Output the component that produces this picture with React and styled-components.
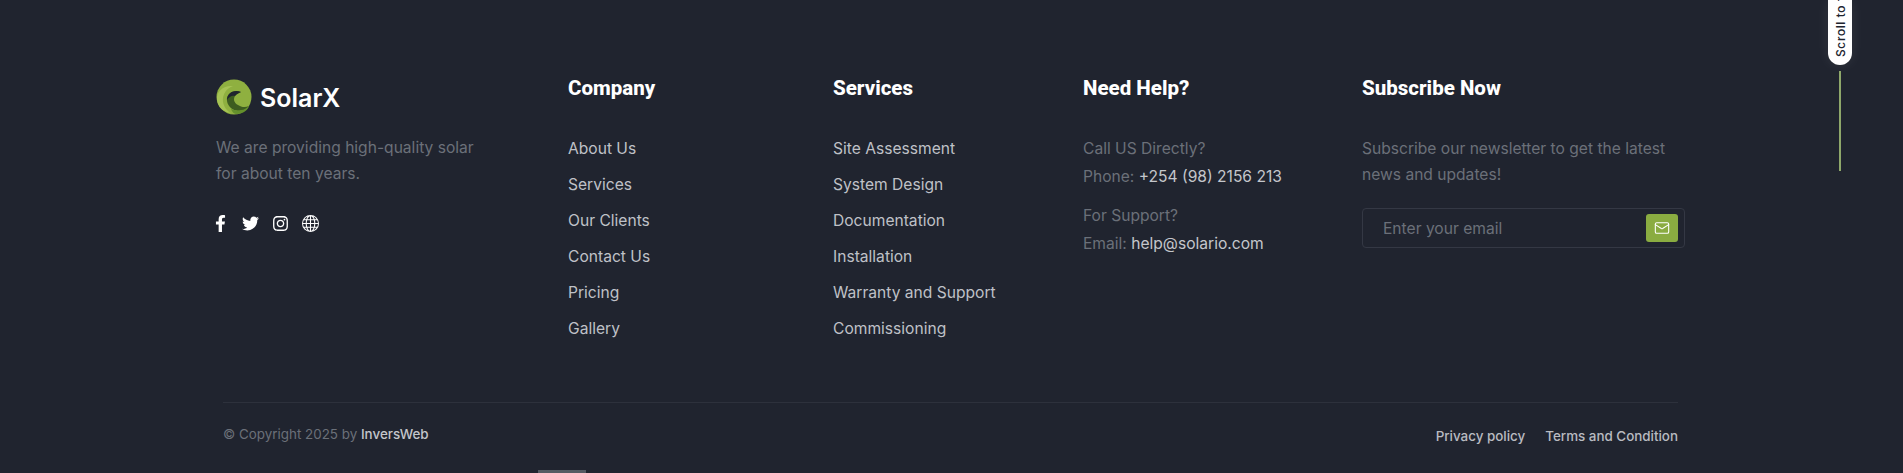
import React from 'react';
import styled, { createGlobalStyle } from 'styled-components';
import { FaFacebookF, FaTwitter, FaInstagram } from 'react-icons/fa';
import { BsGlobe } from 'react-icons/bs';
import { Mail } from 'lucide-react';

const GlobalStyle = createGlobalStyle`
  html, body {
    margin: 0;
    padding: 0;
    height: 473px;
    overflow: hidden;
    background: #20242f;
  }
  * { box-sizing: border-box; }
`;

const Footer = styled.footer`
  position: relative;
  height: 473px;
  overflow: hidden;
  padding: 74px 218px 0 216px;
  background: #20242f;
  font-family: Inter, "Liberation Sans", sans-serif;
  font-size: 15.6px;
  color: #6b7079;
`;

const Columns = styled.div`
  display: grid;
  grid-template-columns: 352px 265px 250px 279px 1fr;
  height: 328px;
`;

const Column = styled.div`
  display: flex;
  flex-direction: column;
`;

const Brand = styled.div`
  display: flex;
  align-items: center;
  gap: 8px;
  height: 36px;
  margin: 5px 0 20px;
`;

const BrandName = styled.span`
  padding-top: 2px;
  font-family: Inter, sans-serif;
  font-size: 25px;
  font-weight: 600;
  color: #fff;
`;

const Paragraph = styled.p`
  margin: 0;
  line-height: 26px;
  white-space: nowrap;
`;

const Socials = styled.div`
  display: flex;
  align-items: center;
  gap: 13px;
  margin: 28px 0 0 -4px;
  color: #fff;
  font-size: 17px;
  line-height: 0;
`;

const Heading = styled.h4`
  margin: 0 0 34px;
  height: 28px;
  font-family: Roboto, sans-serif;
  font-size: 20.5px;
  font-weight: 800;
  line-height: 28px;
  color: #fff;
`;

const LinkList = styled.ul`
  margin: 2px 0 0;
  padding: 0;
  list-style: none;
  display: flex;
  flex-direction: column;
  gap: 14px;
`;

const LinkItem = styled.li`
  line-height: 22px;
  color: #bfc1c7;
`;

const ContactBlock = styled.div`
  margin: -1px 0 12px;
  line-height: 28px;
`;

const Strong = styled.span`
  color: #c4c6cb;
`;

const SubscribeForm = styled.form`
  display: flex;
  align-items: center;
  justify-content: space-between;
  width: 323px;
  height: 40px;
  margin-top: 20px;
  padding: 0 6px 0 20px;
  border: 1px solid #343844;
  border-radius: 4px;
`;

const EmailInput = styled.input`
  flex: 1;
  min-width: 0;
  padding: 0;
  border: 0;
  outline: 0;
  background: transparent;
  font: inherit;
  color: #fff;
  &::placeholder { color: #6b7079; opacity: 1; }
`;

const SendButton = styled.button`
  display: flex;
  align-items: center;
  justify-content: center;
  width: 32px;
  height: 28px;
  padding: 0;
  border: 0;
  border-radius: 3px;
  background: #8aac41;
  color: #fff;
`;

const BottomBar = styled.div`
  display: flex;
  justify-content: space-between;
  align-items: center;
  margin: 0 7px;
  height: 64px;
  border-top: 1px solid #2d313c;
`;

const Copyright = styled.div`
  font-size: 13.4px;
  margin-top: -1px;
`;

const CopyrightLink = styled.span`
  color: #c4c6cb;
  font-weight: 500;
`;

const LegalLinks = styled.div`
  display: flex;
  gap: 20px;
  margin-top: 3px;
  font-size: 13.4px;
  font-weight: 500;
  color: #b9bbc1;
`;

const ScrollTop = styled.div`
  position: absolute;
  top: 0;
  left: 1828px;
  display: flex;
  flex-direction: column;
  align-items: center;
`;

const ScrollPill = styled.div`
  display: flex;
  justify-content: center;
  align-items: flex-start;
  width: 24px;
  height: 65px;
  padding-top: 2px;
  border-radius: 0 0 12px 12px;
  background: #fff;
  box-shadow: 0 0 14px rgba(255, 255, 255, 0.08);
  overflow: hidden;
`;

const ScrollText = styled.span`
  writing-mode: vertical-rl;
  transform: rotate(180deg);
  font-family: Inter, sans-serif;
  font-size: 12px;
  font-weight: 500;
  letter-spacing: 0.6px;
  color: #20242f;
  height: 55px;
  white-space: nowrap;
  text-align: left;
`;

const ScrollLine = styled.div`
  width: 2px;
  height: 100px;
  margin-top: 6px;
  background: #8fa86b;
`;

const StrayMark = styled.div`
  position: absolute;
  left: 538px;
  bottom: 0;
  width: 48px;
  height: 3px;
  background: #555a63;
`;

const Logo = () => (
  <svg width="36" height="36" viewBox="0 0 36 36">
    <circle cx="18" cy="18" r="17.5" fill="#8fb040" />
    <path d="M1 21C0 12 8 6 17 7 11 9 6 15 7 23c1 5 4 9 8 11C7 33 2 28 1 21z" fill="#a6c355" />
    <path d="M25 13C17 10 10 15 11 22c1 6 6 10 13 10 4 0 7-2 9-5-4 2-8 1-11-1-4-2-5-6-3-9 1-2 4-3 6-4z" fill="#3d5c20" />
    <path d="M15 30c3 1 6 2 10 1 3 0 6-2 8-4-1 4-6 8-12 8-3 0-5-2-6-5z" fill="#64902c" />
    <path d="M25 13C17 10 11 15 11 21c2-3 5-5 8-4 1-2 4-3 6-4z" fill="#20242f" />
  </svg>
);

const companyLinks = ['About Us', 'Services', 'Our Clients', 'Contact Us', 'Pricing', 'Gallery'];
const serviceLinks = ['Site Assessment', 'System Design', 'Documentation', 'Installation', 'Warranty and Support', 'Commissioning'];

export default function App() {
  return (
    <Footer>
      <GlobalStyle />
      <Columns>
        <Column>
          <Brand>
            <Logo />
            <BrandName>SolarX</BrandName>
          </Brand>
          <Paragraph>We are providing high-quality solar<br />for about ten years.</Paragraph>
          <Socials>
            <FaFacebookF />
            <FaTwitter />
            <FaInstagram />
            <BsGlobe />
          </Socials>
        </Column>
        <Column>
          <Heading>Company</Heading>
          <LinkList>
            {companyLinks.map((l) => <LinkItem key={l}>{l}</LinkItem>)}
          </LinkList>
        </Column>
        <Column>
          <Heading>Services</Heading>
          <LinkList>
            {serviceLinks.map((l) => <LinkItem key={l}>{l}</LinkItem>)}
          </LinkList>
        </Column>
        <Column>
          <Heading>Need Help?</Heading>
          <ContactBlock>
            Call US Directly?<br />
            Phone: <Strong>+254 (98) 2156 213</Strong>
          </ContactBlock>
          <ContactBlock>
            For Support?<br />
            Email: <Strong>help@solario.com</Strong>
          </ContactBlock>
        </Column>
        <Column>
          <Heading>Subscribe Now</Heading>
          <Paragraph>Subscribe our newsletter to get the latest<br />news and updates!</Paragraph>
          <SubscribeForm onSubmit={(e) => e.preventDefault()}>
            <EmailInput placeholder="Enter your email" />
            <SendButton type="submit"><Mail size={16} strokeWidth={1.6} /></SendButton>
          </SubscribeForm>
        </Column>
      </Columns>
      <BottomBar>
        <Copyright>© Copyright 2025 by <CopyrightLink>InversWeb</CopyrightLink></Copyright>
        <LegalLinks>
          <span>Privacy policy</span>
          <span>Terms and Condition</span>
        </LegalLinks>
      </BottomBar>
      <ScrollTop>
        <ScrollPill><ScrollText>Scroll to top</ScrollText></ScrollPill>
        <ScrollLine />
      </ScrollTop>
      <StrayMark />
    </Footer>
  );
}
